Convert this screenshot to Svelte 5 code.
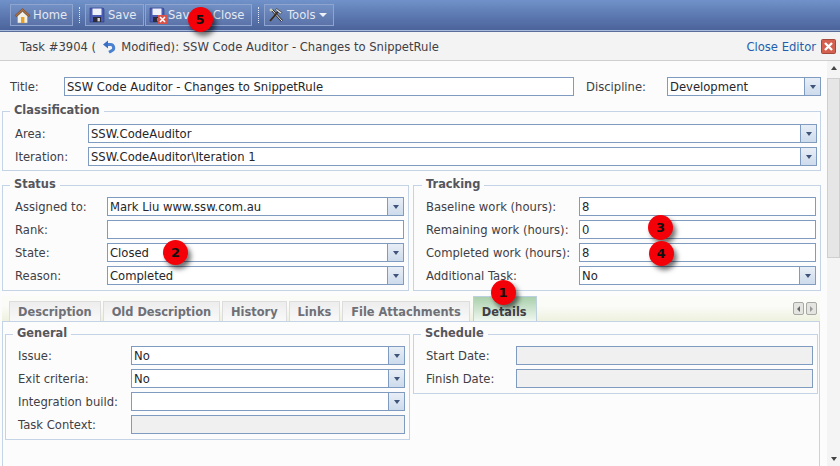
<script>
  const statusRows = [
    { label: "Assigned to:", value: "Mark Liu www.ssw.com.au", select: true },
    { label: "Rank:", value: "" },
    { label: "State:", value: "Closed", select: true },
    { label: "Reason:", value: "Completed", select: true }
  ];
  const trackingRows = [
    { label: "Baseline work (hours):", value: "8" },
    { label: "Remaining work (hours):", value: "0" },
    { label: "Completed work (hours):", value: "8" },
    { label: "Additional Task:", value: "No", select: true }
  ];
  const generalRows = [
    { label: "Issue:", value: "No", select: true },
    { label: "Exit criteria:", value: "No", select: true },
    { label: "Integration build:", value: "", select: true },
    { label: "Task Context:", value: "", disabled: true }
  ];
  const scheduleRows = [
    { label: "Start Date:", value: "", disabled: true },
    { label: "Finish Date:", value: "", disabled: true }
  ];
  const tabs = ["Description", "Old Description", "History", "Links", "File Attachments"];
  const badges = [
    { n: 1, x: 503, y: 292 },
    { n: 2, x: 175.5, y: 252.5 },
    { n: 3, x: 660.5, y: 227 },
    { n: 4, x: 661, y: 253 },
    { n: 5, x: 200, y: 19 }
  ];
</script>

{#snippet field(row)}
  <div class="field" class:disabled={row.disabled}>
    <span class="value">{row.value}</span>
    {#if row.select}
      <span class="drop"><i></i></span>
    {/if}
  </div>
{/snippet}

{#snippet floppy()}
  <svg width="16" height="16" viewBox="0 0 16 16">
    <path d="M1 1h13l1 1v13H1z" fill="#4a5cb4" stroke="#2c3a80" stroke-width=".6" />
    <rect x="3.500" y="1.500" width="9" height="6.500" fill="#eef0fa" />
    <rect x="4" y="10" width="8" height="5" fill="#2b2b3a" />
    <rect x="8.500" y="11" width="2.400" height="3.400" fill="#d8d8d8" />
  </svg>
{/snippet}

<div class="app">
  <div class="toolbar">
    <button class="tbtn home">
      <svg width="17" height="17" viewBox="0 0 17 17">
        <path d="M3.500 9 8.500 4.600l5 4.400V16h-10z" fill="#f3f1e6" stroke="#8d8d80" stroke-width=".5" />
        <rect x="7" y="10" width="3.400" height="6" fill="#e8a22a" />
        <path d="M8.500 1.500 1 8.500l1.200 1.200L8.500 4l6.300 5.700L16 8.500z" fill="#b5703a" stroke="#5a3a22" stroke-width=".5" />
      </svg>
      Home
    </button>
    <span class="sep"></span>
    <button class="tbtn save">{@render floppy()} Save</button>
    <button class="tbtn saveclose">
      <span class="ico">
        {@render floppy()}
        <svg class="xmark" width="9" height="9" viewBox="0 0 9 9">
          <rect width="9" height="9" fill="#d9534a" />
          <path d="M2 2l5 5M7 2l-5 5" stroke="#fff" stroke-width="1.600" />
        </svg>
      </span>
      Save &amp; Close
    </button>
    <span class="sep"></span>
    <button class="tbtn tools">
      <svg width="16" height="16" viewBox="0 0 16 16">
        <path d="M14 14 4 3" stroke="#2c2a28" stroke-width="2.400" />
        <path d="M14 14 4 3" stroke="#f1efe6" stroke-width="1" />
        <path d="M11 3.500 2 14" stroke="#3a2a1a" stroke-width="1.800" />
        <path d="M8.500 1.500 14 5.500l-1.500 1.500L7.500 3z" fill="#e3e3e3" stroke="#222" stroke-width=".6" />
        <path d="M1.500 3h3M3 1.500v3" stroke="#f6efb8" stroke-width=".9" />
      </svg>
      Tools
      <i class="caret"></i>
    </button>
  </div>

  <div class="titlebar">
    <div class="task">
      Task #3904 (
      <svg class="undo" width="14" height="14" viewBox="0 0 14 14">
        <path d="M5 4.500h3.200a3.300 3.300 0 0 1 1.300 6.400L7 12.300" fill="none" stroke="#4a80d0" stroke-width="3" />
        <path d="M6 .5 1 4.500 6 8.500z" fill="#3a70c4" />
      </svg>
      Modified): SSW Code Auditor - Changes to SnippetRule
    </div>
    <div class="close-editor">
      Close Editor
      <svg width="15" height="15" viewBox="0 0 15 15">
        <rect x=".5" y=".5" width="14" height="14" rx="1" fill="#d4604f" stroke="#a34a3c" />
        <path d="M4 4l7 7M11 4l-7 7" stroke="#fff" stroke-width="2.400" />
      </svg>
    </div>
  </div>

  <div class="body">
    <div class="content">
      <div class="title-row">
        <span class="lbl-title">Title:</span>
        <div class="title-input">{@render field({ value: "SSW Code Auditor - Changes to SnippetRule" })}</div>
        <span class="lbl-disc">Discipline:</span>
        <div class="disc-input">{@render field({ value: "Development", select: true })}</div>
      </div>

      <fieldset class="classification">
        <legend>Classification</legend>
        <div class="row"><span class="lbl">Area:</span>{@render field({ value: "SSW.CodeAuditor", select: true })}</div>
        <div class="row"><span class="lbl">Iteration:</span>{@render field({ value: "SSW.CodeAuditor\\Iteration 1", select: true })}</div>
      </fieldset>

      <div class="two-col">
        <fieldset class="status">
          <legend>Status</legend>
          {#each statusRows as row}
            <div class="row"><span class="lbl">{row.label}</span>{@render field(row)}</div>
          {/each}
        </fieldset>
        <fieldset class="tracking">
          <legend>Tracking</legend>
          {#each trackingRows as row}
            <div class="row"><span class="lbl">{row.label}</span>{@render field(row)}</div>
          {/each}
        </fieldset>
      </div>

      <div class="tabstrip">
        {#each tabs as tab}
          <div class="tab">{tab}</div>
        {/each}
        <div class="tab active">Details</div>
        <div class="tab-scroll">
          <span class="scroll-btn"><i class="tri-left"></i></span>
          <span class="scroll-btn"><i class="tri-right"></i></span>
        </div>
      </div>

      <div class="panel">
        <fieldset class="general">
          <legend>General</legend>
          {#each generalRows as row}
            <div class="row"><span class="lbl">{row.label}</span>{@render field(row)}</div>
          {/each}
        </fieldset>
        <fieldset class="schedule">
          <legend>Schedule</legend>
          {#each scheduleRows as row}
            <div class="row"><span class="lbl">{row.label}</span>{@render field(row)}</div>
          {/each}
        </fieldset>
      </div>
    </div>

    <div class="scrollbar">
      <i class="arrow-up"></i>
      <div class="thumb"></div>
      <i class="arrow-down"></i>
    </div>
  </div>

  {#each badges as b}
    <div class="badge" style="left: {b.x - 12.5}px; top: {b.y - 12.5}px">{b.n}</div>
  {/each}
</div>

<style>
  :global(body) {
    margin: 0;
  }

  .app {
    position: relative;
    width: 840px;
    height: 466px;
    overflow: hidden;
    display: flex;
    flex-direction: column;
    font-family: "DejaVu Sans", Verdana, sans-serif;
    font-size: 11.6px;
    color: #3f4046;
    background: #fcfcfc;
  }

  .toolbar {
    height: 31px;
    box-sizing: border-box;
    flex: none;
    display: flex;
    align-items: flex-start;
    padding: 4px 0 0 10px;
    background: linear-gradient(#7091c9, #4b639b);
    border-bottom: 1px solid #a9bbdb;
  }

  .tbtn {
    height: 22px;
    box-sizing: border-box;
    display: flex;
    align-items: center;
    gap: 3px;
    padding: 0 0 0 3px;
    margin: 0;
    font: inherit;
    color: #e4e9f3;
    background: rgba(255, 255, 255, 0.06);
    border: 1px solid #8fa5cf;
  }

  .home { width: 63px; gap: 2px; }
  .save { width: 59px; margin-right: 1px; }
  .saveclose { width: 107px; }
  .tools { width: 70px; }

  .ico {
    position: relative;
    display: flex;
  }

  .xmark {
    position: absolute;
    right: -2px;
    bottom: -1px;
  }

  .caret {
    width: 0;
    height: 0;
    border: 4px solid transparent;
    border-top-color: #eef1f8;
    border-bottom: 0;
  }

  .sep {
    width: 0;
    height: 16px;
    margin: 3px 5px 0 6px;
    border-left: 1px dotted #e4e9f4;
  }

  .titlebar {
    height: 30px;
    box-sizing: border-box;
    flex: none;
    display: flex;
    align-items: center;
    justify-content: space-between;
    padding: 1px 4px 0 20px;
    background: #f3f3f3;
    border-top: 1px solid #5a6e9c;
    border-bottom: 1px solid #cfcfcf;
  }

  .task {
    display: flex;
    align-items: center;
    gap: 5px;
  }

  .undo {
    margin-left: 1px;
  }

  .close-editor {
    display: flex;
    align-items: center;
    gap: 5px;
    color: #1f5fae;
  }

  .body {
    flex: 1;
    display: flex;
    min-height: 0;
  }

  .content {
    width: 827px;
    box-sizing: border-box;
    padding: 0 6px 0 2px;
  }

  .title-row {
    display: flex;
    align-items: center;
    height: 19px;
    margin-top: 16px;
    margin-bottom: 9px;
  }

  .lbl-title {
    box-sizing: border-box;
    padding: 1px 0 0 8px;
    flex: none;
    width: 62px;
  }

  .title-input {
    width: 510px;
    flex: none;
  }

  .lbl-disc {
    margin-left: 12px;
    padding-top: 1px;
    width: 81px;
    flex: none;
  }

  .disc-input {
    width: 154px;
    flex: none;
  }

  fieldset {
    margin: 0;
    padding: 0;
    min-width: 0;
    box-sizing: border-box;
    border: 1px solid #c4d4e6;
  }

  legend {
    margin-left: 7px;
    padding: 0 4px 2px;
    font-weight: bold;
    font-size: 11.4px;
    line-height: 11px;
    color: #55565c;
  }

  .row {
    display: flex;
    align-items: center;
    height: 19px;
    margin-bottom: 4px;
  }

  .lbl {
    flex: none;
    box-sizing: border-box;
    padding: 1px 0 0 12px;
  }

  .field {
    flex: 1;
    height: 19px;
    min-width: 0;
    box-sizing: border-box;
    display: flex;
    background: #fff;
    border: 1px solid #7f9cc0;
    color: #26262a;
    line-height: 18px;
  }

  .field.disabled {
    background: #f0f0f0;
  }

  .value {
    flex: 1;
    padding-left: 2px;
    white-space: nowrap;
  }

  .drop {
    width: 16px;
    flex: none;
    display: flex;
    align-items: center;
    justify-content: center;
    background: linear-gradient(#e8eef6, #cddbec);
    border-left: 1px solid #7f9cc0;
    box-sizing: border-box;
  }

  .drop i {
    width: 0;
    height: 0;
    border: 3.5px solid transparent;
    border-top: 4px solid #3e5478;
    border-bottom: 0;
  }

  .classification {
    padding: 6px 3px 0 0;
    height: 66px;
    margin-bottom: 8px;
  }

  .classification .lbl { width: 85px; }

  .two-col {
    display: flex;
    gap: 4px;
    width: 819px;
  }

  .status {
    width: 407px;
    height: 112px;
    padding: 5px 4px 0 0;
  }

  .status .lbl { width: 104px; }

  .tracking {
    width: 408px;
    height: 112px;
    padding: 5px 4px 0 0;
  }

  .tracking legend { margin-left: 8px; }

  .tracking .lbl { width: 165px; }

  .tabstrip {
    display: flex;
    align-items: flex-end;
    gap: 2px;
    height: 25px;
    width: 818px;
    margin-top: 5px;
    padding-left: 7px;
    box-sizing: border-box;
    background: linear-gradient(#fbfbf8 40%, #eef1de);
  }

  .tab {
    height: 20px;
    box-sizing: border-box;
    padding: 0 8px;
    display: flex;
    align-items: center;
    font-weight: bold;
    font-size: 11.4px;
    color: #6f7077;
    background: linear-gradient(#ededed, #f9f9f9);
    border: 1px solid #dddddd;
    border-bottom: 0;
  }

  .tab.active {
    height: 25px;
    padding: 5px 9px 0 8px;
    margin-left: 1px;
    color: #3f4046;
    background: linear-gradient(#a9d0ab, #f0f7f0);
    border-color: #bcd0e2;
  }

  .tab-scroll {
    margin-left: auto;
    display: flex;
    gap: 2px;
    padding: 0 3px 6px 0;
  }

  .scroll-btn {
    width: 11px;
    height: 13px;
    box-sizing: border-box;
    display: flex;
    align-items: center;
    justify-content: center;
    background: #e4e4e0;
    border: 1px solid #a8a8a4;
    border-radius: 2px;
  }

  .tri-left, .tri-right {
    width: 0;
    height: 0;
    border: 3px solid transparent;
  }

  .tri-left {
    border-left: 0;
    border-right-color: #666;
  }

  .tri-right {
    border-right: 0;
    border-left-color: #999;
  }

  .panel {
    width: 818px;
    height: 145px;
    box-sizing: border-box;
    display: flex;
    align-items: flex-start;
    gap: 3px;
    padding: 6px 1px 0 2px;
    border: 1px solid #c4d4e6;
    border-bottom: 0;
  }

  .general {
    width: 405px;
    height: 112px;
    padding: 5px 4px 0 0;
  }

  .general .lbl { width: 125px; }

  .schedule {
    width: 405px;
    height: 66px;
    padding: 5px 4px 0 0;
  }

  .schedule .lbl { width: 102px; }

  .scrollbar {
    position: relative;
    width: 13px;
    flex: 1;
    background: #f4f4f4;
    display: flex;
    flex-direction: column;
    align-items: center;
  }

  .arrow-up, .arrow-down {
    width: 0;
    height: 0;
    flex: none;
    border: 3.5px solid transparent;
  }

  .arrow-up {
    margin-top: 5px;
    border-top: 0;
    border-bottom: 4px solid #444;
  }

  .arrow-down {
    margin-top: auto;
    margin-bottom: 5px;
    border-bottom: 0;
    border-top: 4px solid #444;
  }

  .thumb {
    width: 100%;
    height: 180px;
    margin-top: 8px;
    box-sizing: border-box;
    background: #e6e6e6;
    border: 1px solid #cfcfcf;
  }

  .badge {
    position: absolute;
    width: 25px;
    height: 25px;
    border-radius: 50%;
    display: flex;
    align-items: center;
    justify-content: center;
    font-weight: bold;
    font-size: 13px;
    color: #111;
    background: #f40008;
    box-shadow: 3px 4px 5px rgba(0, 0, 0, 0.55);
  }
</style>
